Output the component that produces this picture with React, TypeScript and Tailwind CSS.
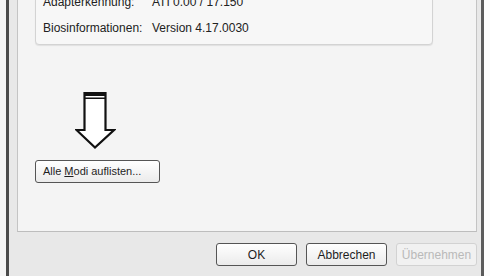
import React from "react";

const font = { fontFamily: '"Liberation Sans", Arial, sans-serif' };

function Btn({ children, disabled }: { children: React.ReactNode; disabled?: boolean }) {
  return (
    <div
      className={
        "w-[81px] h-[23px] rounded-[3px] border flex items-center justify-center text-[12px] " +
        (disabled
          ? "border-[#d2d2d2] text-[#b9b9b9] bg-[#f1f1f1]"
          : "border-[#555555] text-[#1e1e1e] bg-gradient-to-b from-[#ffffff] to-[#ebebeb]")
      }
    >
      {children}
    </div>
  );
}

export default function App() {
  return (
    <div className="w-[490px] h-[276px] flex bg-[#fbfbfb] overflow-hidden" style={font}>
      <div className="w-[6px] h-full bg-[#f4f4f4]" />
      <div className="w-[478px] h-full border-x-[3px] border-l-[#4a4a4a] border-r-[#5a5a5a] bg-[#e8e8e8] flex flex-col">
        <div className="ml-[8px] mr-[4px] h-[232px] bg-[#f4f4f4] border-x border-b border-x-[#c4c4c4] border-b-[#bdbdbd] flex flex-col">
          <div className="ml-[17px] w-[398px] h-[46px] -mt-[1px] border border-[#d3d3d3] rounded-b-[4px] bg-[#f7f7f7] shadow-[0_1px_1px_rgba(0,0,0,0.08)] overflow-hidden">
            <div className="-mt-[9px] pl-[7px] text-[12px] leading-[23px] text-[#222]">
              <div className="flex h-[23px]">
                <span className="w-[109px]">Adapterkennung:</span>
                <span>ATI 0.00 / 17.150</span>
              </div>
              <div className="flex h-[23px] mt-[3px]">
                <span className="w-[109px]">Biosinformationen:</span>
                <span>Version 4.17.0030</span>
              </div>
            </div>
          </div>
          <div className="ml-[57px] mt-[46px] w-[41px] h-[58px]">
            <svg width="41" height="58" viewBox="0 0 41 58">
              <path
                d="M9.5 2 L30.5 2 L30.5 39 L39 39 L20 56.5 L1.5 39 L9.5 39 Z"
                fill="#ffffff"
                stroke="#111"
                strokeWidth="2.2"
                strokeLinejoin="miter"
              />
              <rect x="9" y="1" width="22" height="4" fill="#111" />
              <rect x="9.5" y="6.5" width="21" height="1.5" fill="#111" />
            </svg>
          </div>
          <div className="ml-[17px] mt-[11px] w-[125px] h-[23px] rounded-[3px] border border-[#555555] bg-gradient-to-b from-[#ffffff] to-[#ebebeb] flex items-center pl-[7px] text-[11px] text-[#1e1e1e]">
            Alle <span className="underline ml-[3px]">M</span>odi auflisten...
          </div>
        </div>
        <div className="mt-[11px] pr-[4px] flex justify-end gap-[9px]">
          <Btn>OK</Btn>
          <Btn>Abbrechen</Btn>
          <Btn disabled>Übernehmen</Btn>
        </div>
      </div>
    </div>
  );
}
